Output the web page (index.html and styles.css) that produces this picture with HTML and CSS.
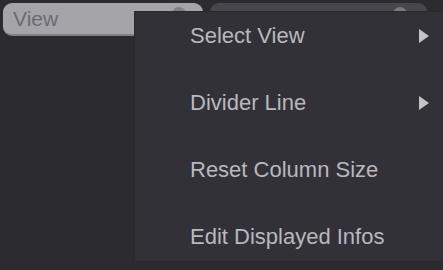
FILE: index.html
```html
<!DOCTYPE html>
<html>
<head>
<meta charset="utf-8">
<link rel="stylesheet" href="styles.css">
</head>
<body>
<div class="bar">
  <div class="pill pill-light"><span class="pill-text">View</span><span class="clear"></span></div>
  <div class="pill pill-dark"><span class="clear clear-dark"></span></div>
</div>
<div class="menu">
  <div class="item"><span>Select View</span><span class="arrow"></span></div>
  <div class="item"><span>Divider Line</span><span class="arrow"></span></div>
  <div class="item"><span>Reset Column Size</span></div>
  <div class="item"><span>Edit Displayed Infos</span></div>
</div>
</body>
</html>
```
FILE: styles.css
```css
html, body {
  margin: 0;
  padding: 0;
  width: 443px;
  height: 270px;
  overflow: hidden;
  background: #2c2b30;
  font-family: "Liberation Sans", Arial, sans-serif;
}
.bar {
  display: flex;
  gap: 7px;
  padding: 3px 0 0 3px;
}
.pill {
  height: 33px;
  border-radius: 9px;
  display: flex;
  align-items: center;
  position: relative;
  box-sizing: border-box;
}
.pill-light {
  width: 200px;
  background: #a5a4a9;
  border-bottom: 2px solid #807f85;
}
.pill-dark {
  width: 217px;
  background: #48474d;
}
.pill-text {
  color: #6c6b70;
  font-size: 21px;
  padding-left: 10px;
}
.clear {
  position: absolute;
  right: 17px;
  top: 4px;
  width: 14px;
  height: 14px;
  border-radius: 50%;
  background: #828186;
}
.clear-dark {
  right: 20px;
  background: #7a797e;
}
.menu {
  position: absolute;
  left: 134px;
  top: 11px;
  width: 309px;
  height: 251px;
  box-sizing: border-box;
  background: #323137;
  border-left: 1px solid #29282c;
  border-top: 1px solid #29282c;
  border-bottom: 1px solid #29282c;
  display: flex;
  flex-direction: column;
  gap: 20px;
  padding: 0 14px 0 55px;
}
.item {
  height: 48px;
  display: flex;
  align-items: center;
  justify-content: space-between;
  color: #b9b8bd;
  font-size: 22px;
}
.arrow {
  width: 0;
  height: 0;
  border-top: 7px solid transparent;
  border-bottom: 7px solid transparent;
  border-left: 10px solid #c4c3c8;
}
```
